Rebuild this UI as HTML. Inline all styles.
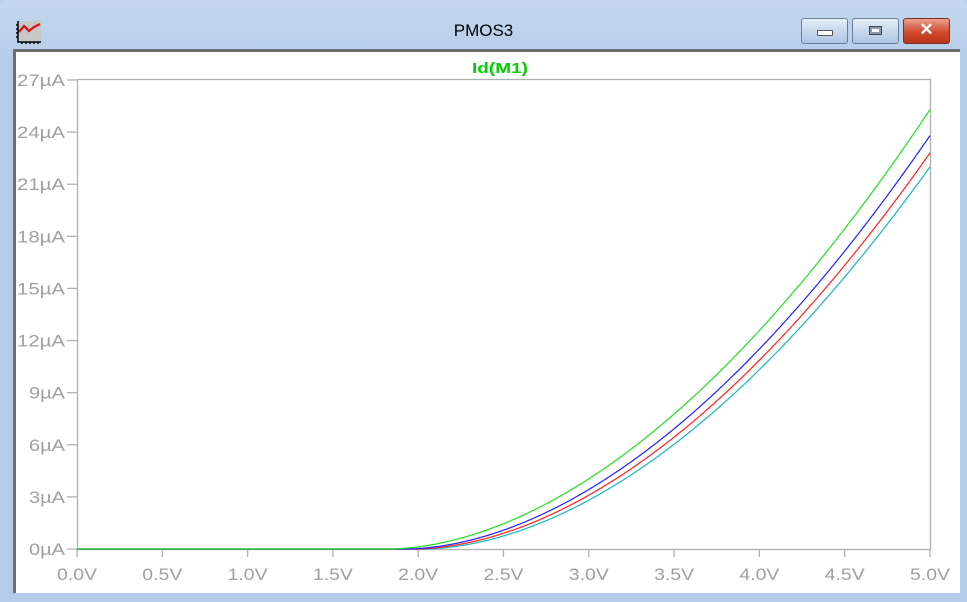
<!DOCTYPE html>
<html><head><meta charset="utf-8"><style>
html,body{margin:0;padding:0;width:967px;height:602px;overflow:hidden;background:#b9d1ea;}
.win{position:absolute;left:0;top:0;width:967px;height:602px;background:linear-gradient(#c4d7ee,#b6cde8 60px,#b6cde8);border-radius:6px 6px 0 0;}
.title{position:absolute;left:0;width:967px;top:21px;text-align:center;font:17px "Liberation Sans",sans-serif;color:#000;}
.btn{position:absolute;top:18px;height:24px;border:1px solid #6a7f9c;border-radius:3px;background:linear-gradient(#e4eef9,#c7d8ec 50%,#aec6e2);}
.client{position:absolute;left:13px;top:49px;width:944px;height:541px;background:#fff;border-left:3px solid #6e6e6e;border-top:3px solid #6e6e6e;}
svg{position:absolute;left:0;top:0}
</style></head><body>
<div class="win">
<svg width="40" height="44" style="left:14px;top:18px"><rect x="4" y="3" width="23" height="20" fill="#c8c8c8"/><polyline points="5,14 10,8 15,13 20,9 26,6" fill="none" stroke="#e01010" stroke-width="2.2"/><path d="M4,3V24H27M4,7h-2M4,11h-2M4,15h-2M4,19h-2M8,24v2M12,24v2M16,24v2M20,24v2M24,24v2" stroke="#000" stroke-width="1.5" fill="none"/></svg>
<div class="title">PMOS3</div>
<div class="btn" style="left:801px;width:45px"><div style="position:absolute;left:15px;top:11px;width:14px;height:4px;background:#fff;border:1px solid #555;border-radius:1px"></div></div>
<div class="btn" style="left:852px;width:45px"><div style="position:absolute;left:16px;top:7px;width:11px;height:7px;border:1px solid #444;background:#fff;box-shadow:inset 0 0 0 2px #8a9ab0"></div></div>
<div class="btn" style="left:903px;width:45px;background:linear-gradient(#e9a08e,#cf4a30 55%,#b83418);border-color:#7a2e22"><div style="position:absolute;left:0;width:45px;top:1px;text-align:center;color:#fff;font:bold 17px 'Liberation Sans',sans-serif">✕</div></div>
</div>
<div class="client"></div>
<svg width="967" height="602" id="plot" font-family="Liberation Sans, sans-serif" font-size="17" fill="#a0a0a0">
<rect x="77.5" y="79.5" width="853" height="470" fill="none" stroke="#b0b0b0" stroke-width="1.3"/>
<text x="472" y="73" fill="#00d000" font-weight="bold" font-size="15" textLength="56" lengthAdjust="spacingAndGlyphs">Id(M1)</text>
<g id="g"></g>
</svg>
<script>
var g=document.getElementById('g'),s='';
var x0=77,x1=930,y0=549,yt=80,ys=(y0-yt)/27;
for(var i=0;i<=9;i++){var y=y0-i*3*ys;var t=(i*3)+'µA',w=t.length==3?36:48;s+='<line x1="67" x2="77" y1="'+y+'" y2="'+y+'" stroke="#b0b0b0" stroke-width="1.3"/><text x="'+(65-w)+'" y="'+(y+6)+'" textLength="'+w+'" lengthAdjust="spacingAndGlyphs">'+t+'</text>';}
for(var i=0;i<=10;i++){var x=x0+i*(x1-x0)/10;var lx=(i==10?x-20:x-20);s+='<line x1="'+x+'" x2="'+x+'" y1="549" y2="557" stroke="#b0b0b0" stroke-width="1.3"/><text x="'+lx+'" y="580" textLength="40" lengthAdjust="spacingAndGlyphs">'+(i*0.5).toFixed(1)+'V</text>';}
var cs=[['#17b8b8',2.02,22.0],['#ff2020',1.97,22.8],['#2020ff',1.92,23.8],['#20e020',1.82,25.3]];
cs.forEach(function(c){var p='';for(var x=x0;x<=x1;x++){var v=(x-x0)/(x1-x0)*5,I=v>c[1]?c[2]*Math.pow((v-c[1])/(5-c[1]),1.85):0;p+=(p?'L':'M')+x+','+(y0-I*ys).toFixed(1);}s+='<path d="'+p+'" fill="none" stroke="'+c[0]+'" stroke-width="1.2"/>';});
g.innerHTML=s;
</script>
</body></html>
